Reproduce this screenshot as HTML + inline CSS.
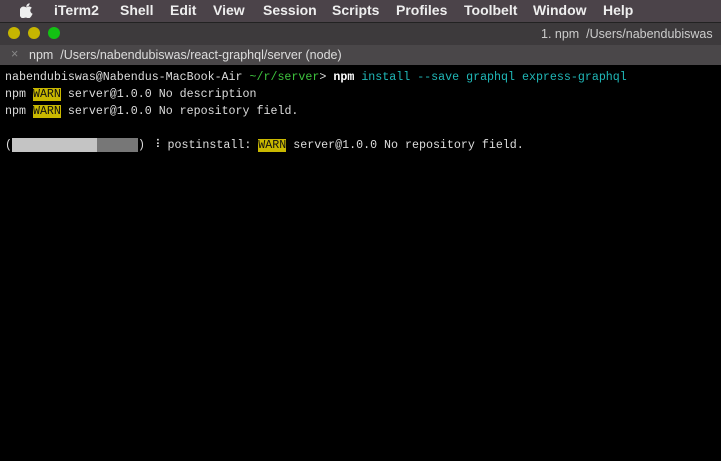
<!DOCTYPE html>
<html><head><meta charset="utf-8"><style>
*{margin:0;padding:0;box-sizing:border-box}
body{width:721px;height:461px;overflow:hidden;background:#000;font-family:"Liberation Sans",sans-serif;position:relative}
.menu{position:absolute;left:0;top:0;width:721px;height:22px;background:#4b4349;color:#eee;font-size:14px;font-weight:bold}
.menu span{position:absolute;top:2px}
.title{position:absolute;top:22px;left:0;width:721px;height:23px;background:#3d3a3c;border-top:1px solid #222}
.dot{position:absolute;top:27px;width:12px;height:12px;border-radius:50%}
.tab{position:absolute;top:45px;left:0;width:721px;height:20px;background:#4a4749;color:#ddd;font-size:12.5px}
.term{position:absolute;left:5px;top:69px;font-family:"Liberation Mono",monospace;font-size:11.65px;line-height:17px;color:#ddd;white-space:pre}
.w{background:#c9b800;color:#111}
.g{color:#3ec43e}.c{color:#20b8b8}.b{color:#fff;font-weight:bold}
.blk{display:inline-block;vertical-align:top;height:14px;margin-top:1px}
</style></head><body>
<div class="menu">
<svg style="position:absolute;left:20px;top:3px" width="13" height="15" viewBox="0 0 13 15"><path d="M9.6 0.2c0.1 1-0.3 1.9-0.9 2.6-0.6 0.7-1.5 1.2-2.4 1.1-0.1-0.9 0.3-1.9 0.9-2.5 0.6-0.7 1.6-1.2 2.4-1.2zM12.6 10.8c-0.4 0.9-0.6 1.3-1.1 2.1-0.7 1.1-1.7 2.4-2.9 2.4-1.1 0-1.4-0.7-2.9-0.7-1.5 0-1.8 0.7-2.9 0.7-1.2 0-2.1-1.2-2.8-2.3C-1.1 10 -0.6 6.1 1 4.6c0.7-0.7 1.7-1.1 2.6-1.1 1.1 0 1.8 0.7 2.8 0.7 0.9 0 1.5-0.7 2.8-0.7 0.9 0 1.9 0.5 2.6 1.4-2.3 1.3-1.9 4.6 0.8 5.9z" fill="#eee"/></svg>
<span style="left:54px">iTerm2</span><span style="left:120px">Shell</span><span style="left:170px">Edit</span><span style="left:213px">View</span><span style="left:263px">Session</span><span style="left:332px">Scripts</span><span style="left:396px">Profiles</span><span style="left:464px">Toolbelt</span><span style="left:533px">Window</span><span style="left:603px">Help</span>
</div>
<div class="title"><span style="position:absolute;left:541px;top:4px;color:#ccc;font-size:12.5px;white-space:nowrap">1. npm &nbsp;/Users/nabendubiswas</span></div>
<div class="dot" style="left:8px;background:#c6b500"></div>
<div class="dot" style="left:28px;background:#c6b500"></div>
<div class="dot" style="left:48px;background:#13c113"></div>
<div class="tab"><span style="position:absolute;left:11px;top:2px;color:#888">×</span><span style="position:absolute;left:29px;top:3px">npm &nbsp;/Users/nabendubiswas/react-graphql/server (node)</span></div>
<div class="term">nabendubiswas@Nabendus-MacBook-Air <span class="g">~/r/server</span>&gt; <span class="b">npm</span> <span class="c">install --save graphql express-graphql</span>
npm <span class="w">WARN</span> server@1.0.0 No description
npm <span class="w">WARN</span> server@1.0.0 No repository field.

(<span class="blk" style="width:85px;background:#c4c4c4"></span><span class="blk" style="width:41px;background:#777"></span>) ⠸ postinstall: <span class="w">WARN</span> server@1.0.0 No repository field.</div>
</body></html>
